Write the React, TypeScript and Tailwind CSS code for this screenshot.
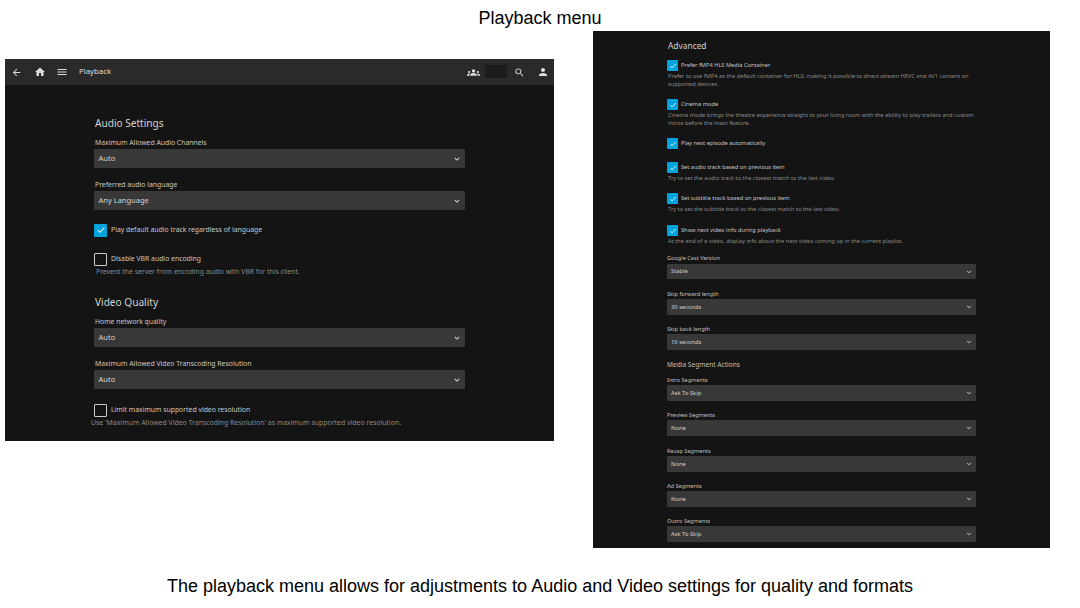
import { MdArrowBack, MdCheck, MdGroups, MdHome, MdKeyboardArrowDown, MdMenu, MdPerson, MdSearch } from "react-icons/md";

function LeftField({ label, value, className = "" }: { label: string; value: string; className?: string }) {
    return (
        <div className={className}>
            <div className="h-[12px] pl-[1px] text-[6.85px] leading-[12px] text-[#c8c8c8]">{label}</div>
            <div className="h-[19px] flex items-center justify-between pl-[4.5px] pr-[3px] rounded-[1px] bg-[#383838] text-[7.5px] text-[#d4d4d4]">
                <span>{value}</span>
                <MdKeyboardArrowDown className="w-[10px] h-[10px] text-[#dddddd]" />
            </div>
        </div>
    );
}

function LeftCheck({ label, checked, className = "" }: { label: string; checked?: boolean; className?: string }) {
    return (
        <div className={`flex items-center gap-[4px] h-[14px] ${className}`}>
            <div
                className={`w-[13px] h-[13px] rounded-[1px] flex items-center justify-center shrink-0 ${checked ? "bg-[#00a4dc]" : "border border-[#cccccc]"}`}
            >
                {checked && <MdCheck className="w-[10px] h-[10px] text-white" />}
            </div>
            <span className="text-[6.85px] text-[#c8c8c8]">{label}</span>
        </div>
    );
}

function RightField({ label, value, className = "", short }: { label: string; value: string; className?: string; short?: boolean }) {
    return (
        <div className={className}>
            <div className={`text-[5.6px] leading-[10px] text-[#c0c0c0] ${short ? "h-[11px]" : "h-[10px]"}`}>{label}</div>
            <div
                className={`flex items-center justify-between pl-[4px] pr-[3px] rounded-[1px] bg-[#383838] text-[5.8px] text-[#d0d0d0] ${short ? "h-[15px]" : "h-[16px]"}`}
            >
                <span>{value}</span>
                <MdKeyboardArrowDown className="w-[8px] h-[8px] text-[#dddddd]" />
            </div>
        </div>
    );
}

function RightCheck({ label, desc, className = "" }: { label: string; desc?: string; className?: string }) {
    return (
        <div className={className}>
            <div className="flex items-center gap-[3px] h-[11px]">
                <div className="w-[11px] h-[11px] rounded-[1px] bg-[#00a4dc] flex items-center justify-center shrink-0">
                    <MdCheck className="w-[8px] h-[8px] text-white" />
                </div>
                <span className="text-[5.7px] text-[#c4c4c4]">{label}</span>
            </div>
            {desc && <p className="mt-[1px] pl-[1px] text-[5.7px] leading-[8px] text-[#8a8a8a]">{desc}</p>}
        </div>
    );
}

export default function App() {
    return (
        <div className="w-[1080px] h-[608px] bg-white overflow-hidden antialiased font-['Noto_Sans',sans-serif]">
            <div className="h-[31px] pt-[6px] text-center text-[18px] leading-[24px] text-black font-['Liberation_Sans',sans-serif]">
                Playback menu
            </div>

            <div className="flex items-start pl-[5px] gap-[39px]">
                {/* Audio / video panel */}
                <div className="w-[549px] mt-[28px] bg-[#141414]">
                    <div className="h-[26px] flex items-center bg-[#2a2a2a] text-[#dddddd]">
                        <MdArrowBack className="w-[11px] h-[11px] ml-[6px]" />
                        <MdHome className="w-[12px] h-[12px] ml-[12px]" />
                        <MdMenu className="w-[12px] h-[12px] ml-[10px]" />
                        <span className="ml-[11px] text-[7.8px]">Playback</span>
                        <MdGroups className="w-[13px] h-[13px] ml-auto" />
                        <div className="w-[22px] h-[13px] ml-[5.5px] mb-[2px] bg-[#1c1c1c]" />
                        <MdSearch className="w-[11px] h-[11px] ml-[7px]" />
                        <MdPerson className="w-[12px] h-[12px] ml-[12px] mr-[5px]" />
                    </div>
                    <div className="w-[371px] ml-[89px] pt-[30px] pb-[12px]">
                        <h2 className="h-[16px] mb-[6px] pl-[1px] text-[10.1px] leading-[16px] font-normal text-[#d4d4d4]">Audio Settings</h2>
                        <LeftField label="Maximum Allowed Audio Channels" value="Auto" />
                        <LeftField className="mt-[11px]" label="Preferred audio language" value="Any Language" />
                        <LeftCheck className="mt-[13px]" label="Play default audio track regardless of language" checked />
                        <LeftCheck className="mt-[15px]" label="Disable VBR audio encoding" />
                        <p className="h-[12px] ml-[2px] text-[6.85px] leading-[12px] text-[#8a8a8a]">
                            Prevent the server from encoding audio with VBR for this client.
                        </p>
                        <h2 className="h-[16px] mt-[16px] mb-[6px] pl-[1px] text-[10.1px] leading-[16px] font-normal text-[#d4d4d4]">Video Quality</h2>
                        <LeftField label="Home network quality" value="Auto" />
                        <LeftField className="mt-[11px]" label="Maximum Allowed Video Transcoding Resolution" value="Auto" />
                        <LeftCheck className="mt-[14px]" label="Limit maximum supported video resolution" />
                        <p className="h-[12px] -ml-[3px] text-[6.92px] leading-[12px] text-[#8a8a8a]">
                            Use 'Maximum Allowed Video Transcoding Resolution' as maximum supported video resolution.
                        </p>
                    </div>
                </div>

                {/* Advanced panel */}
                <div className="w-[457px] bg-[#141414] pl-[74px] pr-[74px] pt-[9px] pb-[6px]">
                    <h2 className="h-[12px] pl-[1px] text-[8.4px] leading-[12px] font-normal text-[#d0d0d0]">Advanced</h2>
                    <RightCheck
                        className="mt-[8px]"
                        label="Prefer fMP4 HLS Media Container"
                        desc="Prefer to use fMP4 as the default container for HLS, making it possible to direct stream HEVC and AV1 content on supported devices."
                    />
                    <RightCheck
                        className="mt-[11px]"
                        label="Cinema mode"
                        desc="Cinema mode brings the theatre experience straight to your living room with the ability to play trailers and custom intros before the main feature."
                    />
                    <RightCheck className="mt-[11px]" label="Play next episode automatically" />
                    <RightCheck
                        className="mt-[13px]"
                        label="Set audio track based on previous item"
                        desc="Try to set the audio track to the closest match to the last video."
                    />
                    <RightCheck
                        className="mt-[11px]"
                        label="Set subtitle track based on previous item"
                        desc="Try to set the subtitle track to the closest match to the last video."
                    />
                    <RightCheck
                        className="mt-[12px]"
                        label="Show next video info during playback"
                        desc="At the end of a video, display info about the next video coming up in the current playlist."
                    />
                    <RightField className="mt-[8px]" short label="Google Cast Version" value="Stable" />
                    <RightField className="mt-[10px]" label="Skip forward length" value="30 seconds" />
                    <RightField className="mt-[9px]" label="Skip back length" value="10 seconds" />
                    <h3 className="h-[10px] mt-[10px] text-[6.6px] leading-[10px] font-normal text-[#c0c0c0]">Media Segment Actions</h3>
                    <RightField className="mt-[5px]" label="Intro Segments" value="Ask To Skip" />
                    <RightField className="mt-[9px]" label="Preview Segments" value="None" />
                    <RightField className="mt-[10px]" label="Recap Segments" value="None" />
                    <RightField className="mt-[9px]" label="Ad Segments" value="None" />
                    <RightField className="mt-[9px]" label="Outro Segments" value="Ask To Skip" />
                </div>
            </div>

            <div className="mt-[26px] text-center text-[18px] leading-[24px] text-black font-['Liberation_Sans',sans-serif]">
                The playback menu allows for adjustments to Audio and Video settings for quality and formats
            </div>
        </div>
    );
}
